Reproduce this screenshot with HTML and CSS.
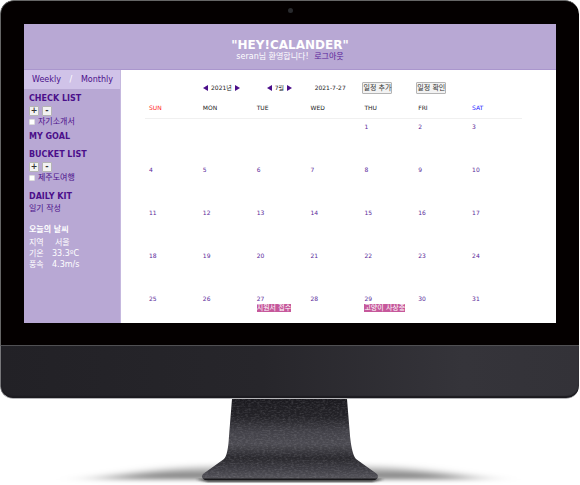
FILE: index.html
```html
<!DOCTYPE html>
<html lang="ko">
<head>
<meta charset="utf-8">
<title>HEY!CALANDER</title>
<link rel="stylesheet" href="styles.css">
</head>
<body>
<div class="monitor">
  <div class="bezel">
    <span class="camera"></span>
    <div class="screen">
      <header class="banner">
        <h1>"HEY!CALANDER"</h1>
        <p>seran님 환영합니다! <a href="#logout">로그아웃</a></p>
      </header>
      <aside class="sidebar">
        <nav class="views"><a href="#weekly">Weekly</a><span>/</span><a href="#monthly">Monthly</a></nav>
        <section class="block">
          <h2>CHECK LIST</h2>
          <div class="tools"><button type="button">+</button><button type="button">-</button></div>
          <label class="item"><input type="checkbox">자기소개서</label>
        </section>
        <section class="block"><h2>MY GOAL</h2></section>
        <section class="block bucket">
          <h2>BUCKET LIST</h2>
          <div class="tools"><button type="button">+</button><button type="button">-</button></div>
          <label class="item"><input type="checkbox">제주도여행</label>
        </section>
        <section class="block kit">
          <h2>DAILY KIT</h2>
          <a href="#diary">일기 작성</a>
        </section>
        <section class="block weather">
          <h3>오늘의 날씨</h3>
          <dl>
            <dt>지역</dt><dd class="city">서울</dd>
            <dt>기온</dt><dd>33.3ºC</dd>
            <dt>풍속</dt><dd>4.3m/s</dd>
          </dl>
        </section>
      </aside>
      <main class="calendar">
        <div class="toolbar">
          <div class="stepper"><a href="#prev-year"><svg viewBox="0 0 5 6"><path d="M5 0v6L0 3z"/></svg></a>2021년<a href="#next-year"><svg viewBox="0 0 5 6"><path d="M0 0v6l5-3z"/></svg></a></div>
          <div class="stepper"><a href="#prev-month"><svg viewBox="0 0 5 6"><path d="M5 0v6L0 3z"/></svg></a>7월<a href="#next-month"><svg viewBox="0 0 5 6"><path d="M0 0v6l5-3z"/></svg></a></div>
          <time datetime="2021-07-27">2021-7-27</time>
          <button type="button">일정 추가</button>
          <button type="button">일정 확인</button>
        </div>
        <table>
          <thead><tr><th class="sun">SUN</th><th>MON</th><th>TUE</th><th>WED</th><th>THU</th><th>FRI</th><th class="sat">SAT</th></tr></thead>
          <tbody>
            <tr><td></td><td></td><td></td><td></td><td>1</td><td>2</td><td>3</td></tr>
            <tr><td>4</td><td>5</td><td>6</td><td>7</td><td>8</td><td>9</td><td>10</td></tr>
            <tr><td>11</td><td>12</td><td>13</td><td>14</td><td>15</td><td>16</td><td>17</td></tr>
            <tr><td>18</td><td>19</td><td>20</td><td>21</td><td>22</td><td>23</td><td>24</td></tr>
            <tr><td>25</td><td>26</td><td>27<span class="event">지원서 접수</span></td><td>28</td><td>29<span class="event">고양이 사상충</span></td><td>30</td><td>31</td></tr>
          </tbody>
        </table>
      </main>
    </div>
  </div>
  <div class="chin"></div>
</div>
<svg class="stand" viewBox="0 0 580 86" aria-hidden="true">
  <defs>
    <linearGradient id="metal" x1="0" y1="0" x2="0" y2="1">
      <stop offset="0" stop-color="#1b1a1f"/><stop offset=".22" stop-color="#242328"/>
      <stop offset=".4" stop-color="#424148"/><stop offset=".55" stop-color="#4b4a51"/>
      <stop offset=".72" stop-color="#29282d"/><stop offset=".86" stop-color="#3f3e45"/>
      <stop offset="1" stop-color="#5a595f"/>
    </linearGradient>
    <linearGradient id="fade" x1="0" y1="0" x2="0" y2="1">
      <stop offset="0" stop-color="#000" stop-opacity="0"/><stop offset=".75" stop-color="#000" stop-opacity=".5"/>
      <stop offset="1" stop-color="#000" stop-opacity=".3"/>
    </linearGradient>
    <filter id="blur" x="-20%" y="-60%" width="140%" height="220%"><feGaussianBlur stdDeviation="22 2"/></filter>
    <filter id="soft"><feGaussianBlur stdDeviation="1"/></filter>
    <filter id="grain" x="0" y="0" width="100%" height="100%">
      <feTurbulence type="fractalNoise" baseFrequency=".35 .7" numOctaves="2" seed="4"/>
      <feColorMatrix values="0 0 0 0 .7  0 0 0 0 .7  0 0 0 0 .75  1.6 0 0 0 -.65"/>
    </filter>
    <clipPath id="shape"><path d="M232 0H347L350 37Q352 56 356 60L377 75Q380 79 375 81H205Q200 79 203 75L224 60Q228 56 229 37Z"/></clipPath>
  </defs>
  <path d="M95 81L200 64H380L482 81Z" fill="url(#fade)" filter="url(#blur)"/>
  <path d="M196 80H384L372 83H208Z" fill="#333" filter="url(#soft)"/>
  <g clip-path="url(#shape)">
    <rect x="195" width="190" height="82" fill="url(#metal)"/>
    <rect x="195" width="190" height="82" filter="url(#grain)" opacity=".22"/>
    <path d="M203 79.5H377V82H203Z" fill="#171619"/>
  </g>
</svg>
</body>
</html>
```
FILE: styles.css
```css
* { box-sizing: border-box; }
body {
  margin: 0;
  background: #fff;
  font: 8px/10px "DejaVu Sans", "Noto Sans CJK KR", sans-serif;
  color: #4b0f8a;
}
h1, h2, h3, p, dl, dd { margin: 0; }
a { color: inherit; text-decoration: none; }
button {
  margin: 0;
  padding: 0;
  font: inherit;
  color: #333;
  background: #f2f2f2;
  border: 1px solid #b4b4b4;
  border-radius: 1px;
}
.monitor {
  margin-right: 1px;
  border-radius: 14px 14px 13px 13px;
  overflow: hidden;
}
.bezel {
  position: relative;
  padding: 23px 23px 22px;
  background: #040000;
  border: 1px solid #666;
  border-width: 1px 0 0 1px;
  border-radius: 14px 14px 0 0;
}
.camera {
  position: absolute;
  top: 7px;
  left: calc(50% - 2px);
  width: 5px;
  height: 5px;
  border-radius: 50%;
  background: #292a2d;
}
.chin {
  height: 54px;
  border: 1px solid #b5b5b8;
  border-width: 1px 0 1px 1px;
  border-color: #505053 #b5b5b8 #b5b5b8 #77777a;
  border-radius: 0 0 13px 13px;
  background: linear-gradient(90deg, #222126, #27262b 45%, #35343a 80%, #333238);
  box-shadow: inset 0 -2px 1px #1c1b20;
}
.screen {
  display: grid;
  grid-template-columns: 97px minmax(0, 1fr);
  background: #fff;
}
.banner {
  grid-column: 1 / -1;
  padding: 14px 0 7px;
  text-align: center;
  color: #fff;
  background: #b8a8d4;
  border-bottom: 1px solid #aa96cd;
}
.banner h1 { font-size: 12px; line-height: 14px; }
.banner p { line-height: 10px; }
.banner p a { margin-left: 3px; color: #5a1e9a; }
.sidebar { background: #b8a8d4; border-right: 1px solid #c5b8de; }
.views {
  display: flex;
  justify-content: space-between;
  padding: 0 7px 0 8px;
  line-height: 19px;
  background: #d0c3e8;
}
.views span { color: #fff; }
.block { padding: 5px 5px 0; }
.block h2 { font-size: 8px; line-height: 10px; }
.tools { display: flex; gap: 3px; padding-top: 2px; }
.tools button {
  width: 10px;
  height: 10px;
  line-height: 8px;
  font-weight: bold;
}
.item { display: flex; align-items: center; gap: 3px; line-height: 11px; }
.item input {
  appearance: none;
  width: 6px;
  height: 6px;
  margin: 0;
  background: #fff;
  border: 1px solid #ddd;
  border-radius: 1px;
}
.bucket { padding-top: 8px; }
.kit { padding-top: 9px; }
.kit a { display: block; line-height: 14px; }
.weather { padding-top: 8px; color: #fff; }
.weather h3 { font-size: 8px; line-height: 12px; }
.weather dl {
  display: grid;
  grid-template-columns: 23px auto;
  justify-content: start;
  padding-top: 1px;
  line-height: 11px;
}
.city { padding-left: 3px; }
.calendar { padding: 11px 34px 0 24px; font-size: 6px; }
.toolbar {
  display: grid;
  grid-template-columns: 64fr 48fr 48fr 54fr 106fr;
  padding-left: 58px;
  align-items: center;
  justify-items: start;
  height: 14px;
  color: #222;
}
.toolbar button { padding: 0; font-size: 7px; line-height: 10px; white-space: nowrap; }
.stepper { display: flex; align-items: center; gap: 3px; white-space: nowrap; }
.stepper a { display: flex; }
.stepper svg { width: 5px; height: 6px; fill: #4b0f8a; }
table {
  width: 100%;
  margin-top: 8px;
  table-layout: fixed;
  border-collapse: collapse;
}
th, td { padding: 0 0 0 4px; text-align: left; vertical-align: top; }
th {
  height: 15px;
  font-weight: normal;
  color: #222;
  border-bottom: 1px solid #f0f0f0;
}
.sun { color: #f22; }
.sat { color: #22f; }
td { height: 43px; padding-top: 3px; color: #5a2a9a; }
tbody tr:first-child td { height: 44px; }
tbody tr:last-child td { height: 32px; }
.event {
  display: table;
  font-size: 7px;
  line-height: 8px;
  white-space: nowrap;
  color: #fff;
  background: #c6589b;
}
.stand { display: block; width: 100%; }
```
